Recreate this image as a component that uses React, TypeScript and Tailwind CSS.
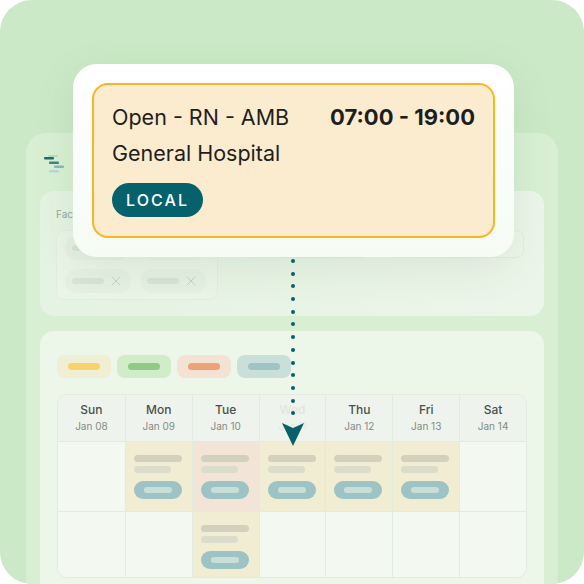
import React from 'react';

type Cell = { tone: 'empty' | 'yellow' | 'pink' };

const days = [
  { name: 'Sun', date: 'Jan 08' },
  { name: 'Mon', date: 'Jan 09' },
  { name: 'Tue', date: 'Jan 10' },
  { name: 'Wed', date: 'Jan 11', faded: true },
  { name: 'Thu', date: 'Jan 12' },
  { name: 'Fri', date: 'Jan 13' },
  { name: 'Sat', date: 'Jan 14' },
];

const rows: Cell[][] = [
  [
    { tone: 'empty' },
    { tone: 'yellow' },
    { tone: 'pink' },
    { tone: 'yellow' },
    { tone: 'yellow' },
    { tone: 'yellow' },
    { tone: 'empty' },
  ],
  [
    { tone: 'empty' },
    { tone: 'empty' },
    { tone: 'yellow' },
    { tone: 'empty' },
    { tone: 'empty' },
    { tone: 'empty' },
    { tone: 'empty' },
  ],
];

const legend = [
  { bg: 'bg-[#f0eed3]', bar: 'bg-[#f6d36f]' },
  { bg: 'bg-[#d0ecc8]', bar: 'bg-[#92c987]' },
  { bg: 'bg-[#f4e3d4]', bar: 'bg-[#eda377]' },
  { bg: 'bg-[#c8e0d9]', bar: 'bg-[#9fc4c3]' },
];

function ShiftCell({ tone }: Cell) {
  const bg =
    tone === 'yellow' ? 'bg-[#f1edd2]' : tone === 'pink' ? 'bg-[#f3e4d8]' : 'bg-[#f3f9f1]';
  return (
    <div className={`${bg} h-full border-l border-[#e1ebdf] first:border-l-0 px-2 pt-[13px]`}>
      {tone !== 'empty' && (
        <>
          <div className="h-[7px] w-12 rounded-full bg-[#d2d1be]" />
          <div className="mt-1 h-[7px] w-[37px] rounded-full bg-[#dcdccb]" />
          <div className="mt-2 flex h-[18px] w-12 items-center justify-center rounded-full bg-[#9ec3c4]">
            <div className="h-[6px] w-7 rounded-full bg-[#c8dfd9]" />
          </div>
        </>
      )}
    </div>
  );
}

function FilterChip() {
  return (
    <div className="flex h-6 w-[66px] items-center rounded-full bg-[#e5f0e2] pl-[7px]">
      <div className="h-[6px] w-8 rounded-full bg-[#d8e3d5]" />
      <svg className="ml-[7px]" width="10" height="10" viewBox="0 0 10 10">
        <path d="M1 1 L9 9 M9 1 L1 9" stroke="#c5cec3" strokeWidth="1" strokeLinecap="round" />
      </svg>
    </div>
  );
}

function AppIcon() {
  return (
    <svg width="22" height="20" viewBox="0 0 22 20">
      <rect x="4" y="0" width="10" height="2" rx="1" fill="#b8dfb5" />
      <rect x="0" y="2" width="10" height="2.5" rx="1" fill="#1f6c72" />
      <rect x="5" y="6.5" width="10" height="2.5" rx="1" fill="#3c8489" />
      <rect x="10" y="10.5" width="10" height="2.5" rx="1" fill="#8ab8b6" />
      <rect x="5" y="15" width="10" height="2.5" rx="1" fill="#bcd6d8" />
    </svg>
  );
}

export default function App() {
  return (
    <div className="h-[584px] w-[584px] bg-white" style={{ fontFamily: 'Inter, "Noto Sans", sans-serif' }}>
      <div className="relative h-full w-full overflow-hidden rounded-[32px] bg-[#cbe9c6] px-[26px] pt-[133px]">
        {/* app panel */}
        <div className="h-[460px] rounded-t-[20px] bg-[#d8efd4] px-[14px] pt-[22px]">
          <div className="pl-1">
            <AppIcon />
          </div>

          {/* filters */}
          <div className="mt-4 h-[125px] rounded-[14px] bg-gradient-to-r from-[#e5f3e2] to-[#ecf5e9] px-4 pt-4">
            <div className="text-[10px] text-[#9aa69a]">Facility</div>
            <div className="mt-2 flex gap-[18px]">
              <div className="flex h-[70px] w-[162px] flex-col gap-[9px] rounded-[8px] border border-[#e2ede0] bg-[#eaf4e7] px-2 pt-[5px]">
                <div className="flex gap-[9px]">
                  <FilterChip />
                  <FilterChip />
                </div>
                <div className="flex gap-[9px]">
                  <FilterChip />
                  <FilterChip />
                </div>
              </div>
              <div className="h-7 w-[133px] rounded-[8px] border border-[#e2ede0] bg-[#edf6ea]" />
              <div className="h-7 w-[137px] rounded-[8px] border border-[#e2ede0] bg-[#edf6ea]" />
            </div>
          </div>

          {/* calendar */}
          <div className="mt-[15px] h-[300px] rounded-[14px] bg-[#ecf6e9] px-[17px] pt-6">
            <div className="flex gap-[6px]">
              {legend.map((l, i) => (
                <div key={i} className={`flex h-[23px] w-[54px] items-center justify-center rounded-[8px] ${l.bg}`}>
                  <div className={`h-[7px] w-8 rounded-full ${l.bar}`} />
                </div>
              ))}
            </div>

            <div className="mt-4 overflow-hidden rounded-[10px] border border-[#e1ebdf]">
              <div className="grid h-[46px] grid-cols-7 bg-[#eef4ed]">
                {days.map((d) => (
                  <div
                    key={d.name}
                    className="flex flex-col items-center justify-center border-l border-[#e1ebdf] first:border-l-0"
                  >
                    <div className={`text-[12px] font-medium leading-4 ${d.faded ? 'text-[#dfe6de]' : 'text-[#4c4f4c]'}`}>
                      {d.name}
                    </div>
                    <div className={`text-[10px] leading-4 ${d.faded ? 'text-[#e3e9e2]' : 'text-[#858a85]'}`}>
                      {d.date}
                    </div>
                  </div>
                ))}
              </div>
              <div className="grid h-[70px] grid-cols-7 border-t border-[#e1ebdf]">
                {rows[0].map((c, ci) => (
                  <ShiftCell key={ci} tone={c.tone} />
                ))}
              </div>
              <div className="grid h-[66px] grid-cols-7 border-t border-[#e1ebdf]">
                {rows[1].map((c, ci) => (
                  <ShiftCell key={ci} tone={c.tone} />
                ))}
              </div>
            </div>
          </div>
        </div>

        {/* shift popover */}
        <div className="absolute left-[73px] top-[64px] h-[193px] w-[441px] rounded-[24px] bg-gradient-to-b from-white to-[#f6fbf4] p-[19px] shadow-[0_10px_40px_rgba(60,110,60,0.10)]">
          <div className="h-full rounded-[16px] border-2 border-[#f6b623] bg-[#fbecd0] pl-[18px] pr-[18px] pt-[14px]">
            <div className="flex items-center justify-between leading-[36px] text-[#1e1e1e]">
              <span className="text-[21.5px]">Open - RN - AMB</span>
              <span className="text-[22px] font-bold">07:00 - 19:00</span>
            </div>
            <div className="text-[21.5px] leading-[36px] text-[#1e1e1e]">General Hospital</div>
            <div className="mt-[12px] inline-flex h-[34px] items-center rounded-full bg-[#05616b] px-[14px] text-[16px] font-medium tracking-[0.13em] text-white">
              LOCAL
            </div>
          </div>
        </div>

        {/* connector */}
        <div className="absolute left-[291px] top-[259px] flex flex-col gap-[8.7px]">
          {Array.from({ length: 13 }).map((_, i) => (
            <div key={i} className="h-1 w-1 rounded-full bg-[#07606a]" />
          ))}
        </div>
        <svg className="absolute left-[280px] top-[420px]" width="26" height="28" viewBox="0 0 26 28">
          <path d="M2 3 L13 8 L24 3 L13 26 Z" fill="#07606a" />
        </svg>
      </div>
    </div>
  );
}
